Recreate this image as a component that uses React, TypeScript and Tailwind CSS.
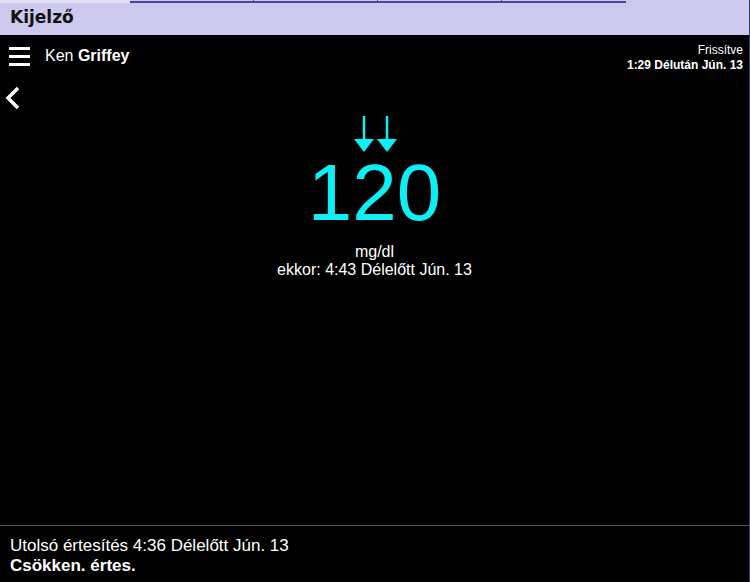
export default function App() {
  return (
    <div className="flex h-[582px] w-[750px] flex-col overflow-hidden bg-black font-['Liberation_Sans',Arial,sans-serif] text-white border-r border-[#2a3a7a]">
      {/* top strip with tabs */}
      <div className="flex h-[35px] flex-col bg-[#cdc8ee]">
        <div className="flex h-[3px]">
          <div className="w-[130px] bg-[#e4e1f6]" />
          <div className="w-[124px] border-b-2 border-r border-[#4a44a6]" />
          <div className="w-[124px] border-b-2 border-r border-[#4a44a6]" />
          <div className="w-[124px] border-b-2 border-r border-[#4a44a6]" />
          <div className="w-[124px] border-b-2 border-[#4a44a6]" />
        </div>
        <div className="flex flex-1 items-center pl-[10px] pb-[2px] font-['DejaVu_Sans',Verdana,sans-serif] text-[17px] font-bold text-[#111]">
          Kijelző
        </div>
      </div>

      {/* main */}
      <div className="flex flex-1 flex-col">
        <div className="flex items-start justify-between">
          <div className="flex items-center pl-[9px] pt-[9px]">
            <div className="flex h-[21px] w-[21px] flex-col justify-between py-[1px]">
              <div className="h-[3px] bg-white" />
              <div className="h-[3px] bg-white" />
              <div className="h-[3px] bg-white" />
            </div>
            <div className="ml-[15px] text-[16px]">
              Ken <span className="font-bold">Griffey</span>
            </div>
          </div>
          <div className="pr-[6px] pt-[8px] text-right text-[12px] leading-[15px]">
            <div>Frissítve</div>
            <div className="font-bold">1:29 Délután Jún. 13</div>
          </div>
        </div>

        <div className="pl-[4px] pt-[13px]">
          <svg width="18" height="24" viewBox="0 0 18 24">
            <path d="M14 2 L4 12 L14 22" fill="none" stroke="white" strokeWidth="3.5" />
          </svg>
        </div>

        <div className="flex flex-col items-center">
          <svg width="46" height="37" viewBox="0 0 46 37" className="ml-[1px] mt-[6px]">
            <g stroke="#0cf0f5" strokeWidth="2.5" fill="#0cf0f5">
              <line x1="12" y1="0" x2="12" y2="26" />
              <line x1="35" y1="0" x2="35" y2="26" />
            </g>
            <polygon points="2,23 22,23 12,36" fill="#0cf0f5" />
            <polygon points="25,23 45,23 35,36" fill="#0cf0f5" />
          </svg>
          <div className="text-[80px] leading-[80px] text-[#0cf0f5]">120</div>
          <div className="mt-[10px] text-[16px] leading-[18px]">mg/dl</div>
          <div className="text-[16px] leading-[18px]">ekkor: 4:43 Délelőtt Jún. 13</div>
        </div>
      </div>

      {/* footer */}
      <div className="h-[57px] border-t border-[#555] pl-[10px] pt-[10px] text-[17px] leading-[20px]">
        <div>Utolsó értesítés 4:36 Délelőtt Jún. 13</div>
        <div className="font-bold">Csökken. értes.</div>
      </div>
    </div>
  );
}
